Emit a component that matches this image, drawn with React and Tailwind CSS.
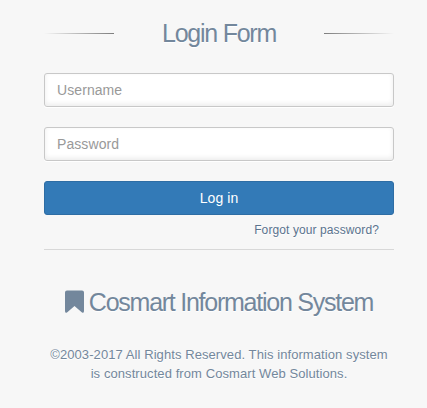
import React, { useState } from 'react';

const App = () => {
  const [username, setUsername] = useState('');
  const [password, setPassword] = useState('');

  const inputClass =
    "block w-full h-[34px] px-3 mb-5 rounded-[3px] border border-[#c8c8c8] bg-white text-sm tracking-[0.08px] text-[#777] placeholder:text-[#999] shadow-[0_1px_0_#fff,inset_0_-2px_5px_rgba(0,0,0,0.08)] outline-none";

  return (
    <div className="h-[408px] bg-[#f7f7f7] pl-11 pr-[33px] pt-[17px] text-center text-[#73879c] font-['Liberation_Sans',Arial,sans-serif] [text-shadow:0_1px_0_#fff]">
      {/* Title */}
      <div className="flex items-center justify-between h-8 mb-6">
        <span className="w-[70px] h-px bg-linear-to-l from-[#7e7e7e] to-[#f7f7f7]"></span>
        <h1 className="text-[25px] leading-8 tracking-[-1.25px]">Login Form</h1>
        <span className="w-[70px] h-px bg-linear-to-r from-[#7e7e7e] to-[#f7f7f7]"></span>
      </div>

      <form onSubmit={(e) => e.preventDefault()}>
        <input
          className={inputClass}
          placeholder="Username"
          value={username}
          onChange={(e) => setUsername(e.target.value)}
        />
        <input
          type="password"
          className={inputClass}
          placeholder="Password"
          value={password}
          onChange={(e) => setPassword(e.target.value)}
        />
        <button className="block w-full h-[34px] rounded-[3px] border border-[#2e6da4] bg-[#337ab7] text-sm tracking-[0.1px] text-white [text-shadow:none]">
          Log in
        </button>
        <div className="flex justify-end pt-[6px] pr-[15px]">
          <a href="#" className="text-xs leading-[18px] tracking-[0.1px] text-[#5a738e]">Forgot your password?</a>
        </div>
      </form>

      {/* Footer */}
      <footer className="mt-[10px] pt-[36px] border-t border-[#d8d8d8]">
        <div className="flex items-start justify-center gap-[5px] mb-[27px]">
          <svg className="w-[19px] h-[23px] mt-1" viewBox="0 0 19 23" fill="currentColor">
            <path d="M2 0.500h15q2 0 2 2v18.500q0 2.800-2.300 1.200L9.500 16l-7.200 6.200Q0 23.800 0 21V2.500q0-2 2-2z" />
          </svg>
          <h1 className="text-[25px] leading-8 tracking-[-1.25px]">Cosmart Information System</h1>
        </div>
        <p className="text-[13px] leading-[19px] tracking-[0.08px]">
          ©2003-2017 All Rights Reserved. This information system<br />is constructed from Cosmart Web Solutions.
        </p>
      </footer>
    </div>
  );
};

export default App;
